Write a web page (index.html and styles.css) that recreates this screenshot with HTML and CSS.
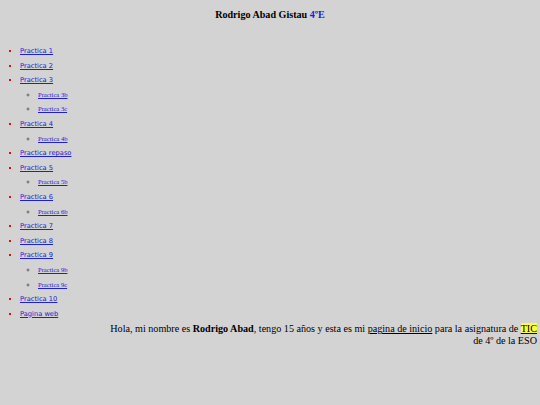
FILE: index.html
```html
<!DOCTYPE html>
<html lang="es">
<head>
<meta charset="utf-8">
<title>Rodrigo Abad Gistau</title>
<link rel="stylesheet" href="styles.css">
</head>
<body>
<h1 class="title">Rodrigo Abad Gistau <span class="grade">4ºE</span></h1>
<ul class="menu">
  <li><a href="#">Practica 1</a></li>
  <li><a href="#">Practica 2</a></li>
  <li><a href="#">Practica 3</a>
    <ul class="sub">
      <li><a href="#">Practica 3b</a></li>
      <li><a href="#">Practica 3c</a></li>
    </ul>
  </li>
  <li><a href="#">Practica 4</a>
    <ul class="sub">
      <li><a href="#">Practica 4b</a></li>
    </ul>
  </li>
  <li><a href="#">Practica repaso</a></li>
  <li><a href="#">Practica 5</a>
    <ul class="sub">
      <li><a href="#">Practica 5b</a></li>
    </ul>
  </li>
  <li><a href="#">Practica 6</a>
    <ul class="sub">
      <li><a href="#">Practica 6b</a></li>
    </ul>
  </li>
  <li><a href="#">Practica 7</a></li>
  <li><a href="#">Practica 8</a></li>
  <li><a href="#">Practica 9</a>
    <ul class="sub">
      <li><a href="#">Practica 9b</a></li>
      <li><a href="#">Practica 9c</a></li>
    </ul>
  </li>
  <li><a href="#">Practica 10</a></li>
  <li><a href="#">Pagina web</a></li>
</ul>
<p class="intro">Hola, mi nombre es <b>Rodrigo Abad</b>, tengo 15 años y esta es mi <u>pagina de inicio</u> para la asignatura de <mark class="tic">TIC</mark><br>de 4º de la ESO</p>
</body>
</html>
```
FILE: styles.css
```css
html, body {
  margin: 0;
  padding: 0;
  background: #d3d3d3;
}
body {
  font-family: "Liberation Serif", serif;
  color: #000;
}
.title {
  margin: 0;
  padding-top: 8px;
  height: 44px;
  box-sizing: border-box;
  text-align: center;
  font-size: 10.1px;
  line-height: 14px;
  font-weight: bold;
}
.grade {
  color: #1a1ae0;
}
.menu {
  margin: 0;
  padding: 0 0 0 20px;
  list-style: square;
  font-family: "DejaVu Sans", Verdana, sans-serif;
  font-size: 6.7px;
}
.menu > li {
  line-height: 14.6px;
}
.menu > li::marker {
  color: #e01010;
}
.menu a {
  color: #2020d0;
}
.sub {
  margin: 0;
  padding: 0 0 0 18px;
  list-style: circle;
  font-family: "Liberation Serif", serif;
  font-size: 6.6px;
}
.sub li {
  line-height: 14.6px;
}
.sub li::marker {
  color: #666;
}
.intro {
  margin: 2px 3px 0 0;
  text-align: right;
  font-size: 10.15px;
  line-height: 12px;
}
.tic {
  background: #ffff33;
  text-decoration: underline;
  color: #000;
}
```
